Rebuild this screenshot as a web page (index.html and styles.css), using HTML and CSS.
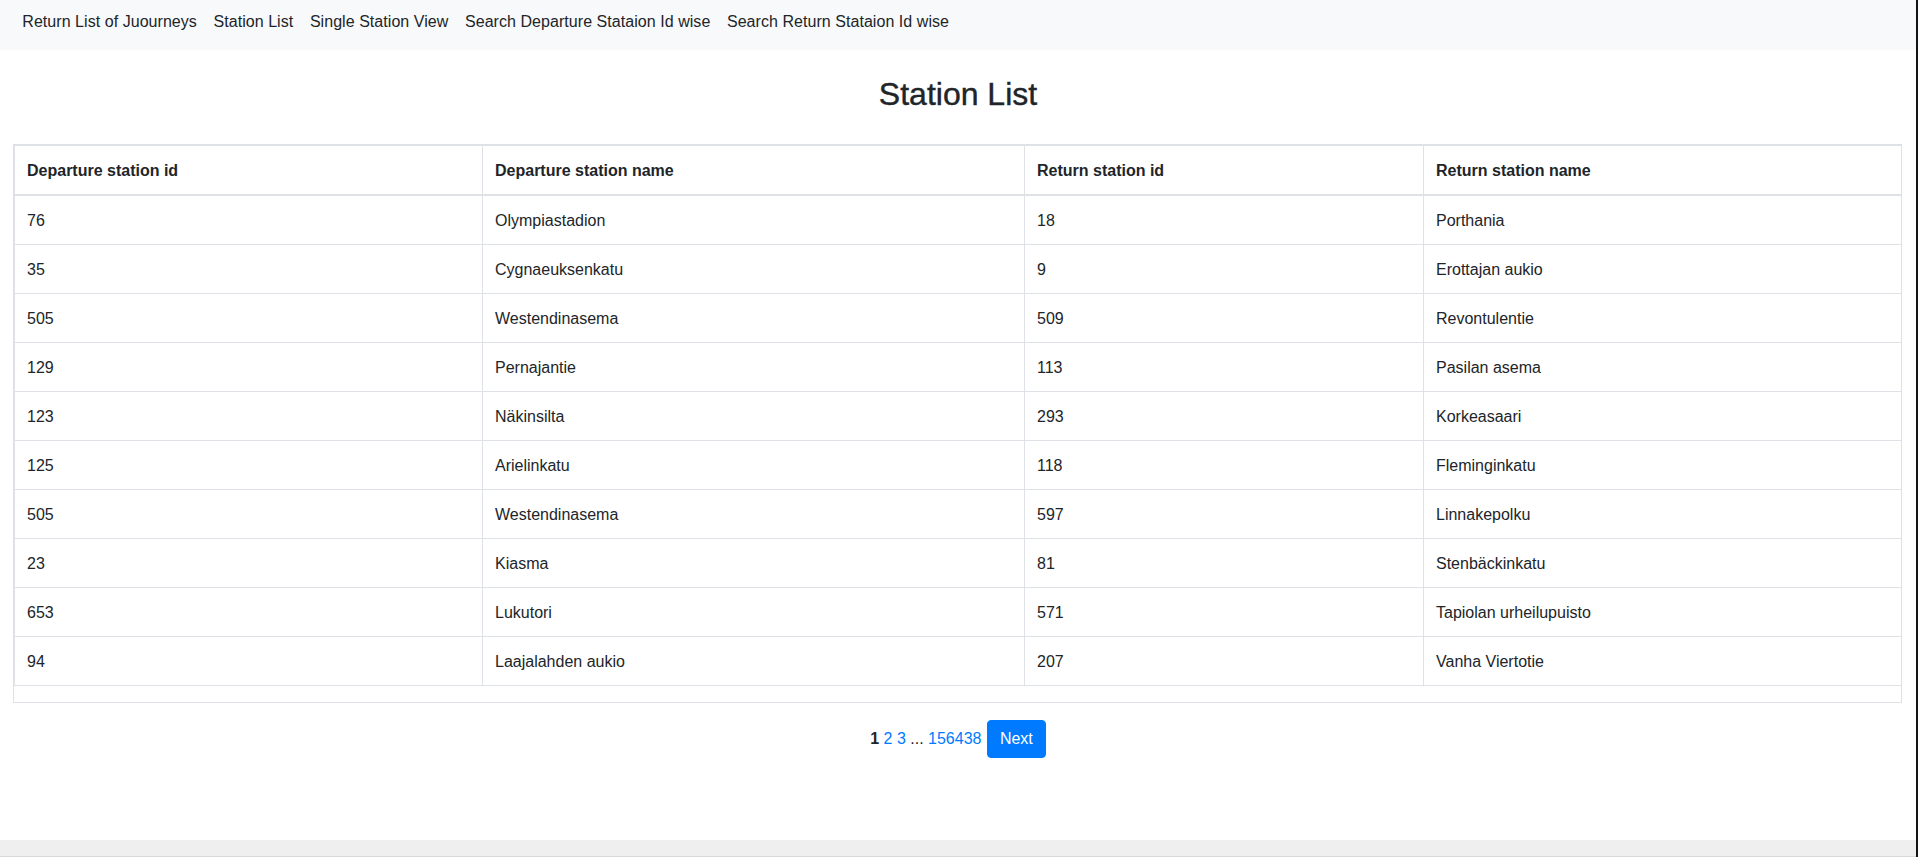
FILE: index.html
```html
<!DOCTYPE html>
<html lang="en">
<head>
<meta charset="utf-8">
<title>Station List</title>
<link rel="stylesheet" href="styles.css">
</head>
<body>
<div class="page">
  <nav class="navbar">
    <a class="nav-link" href="#">Return List of Juourneys</a>
    <a class="nav-link" href="#">Station List</a>
    <a class="nav-link" href="#">Single Station View</a>
    <a class="nav-link" href="#">Search Departure Stataion Id wise</a>
    <a class="nav-link" href="#">Search Return Stataion Id wise</a>
  </nav>
  <main class="main">
    <h2 class="title">Station List</h2>
    <div class="table-wrap">
      <table class="table">
        <colgroup>
          <col class="c1"><col class="c2"><col class="c3"><col class="c4">
        </colgroup>
        <thead>
          <tr><th>Departure station id</th><th>Departure station name</th><th>Return station id</th><th>Return station name</th></tr>
        </thead>
        <tbody>
          <tr><td>76</td><td>Olympiastadion</td><td>18</td><td>Porthania</td></tr>
          <tr><td>35</td><td>Cygnaeuksenkatu</td><td>9</td><td>Erottajan aukio</td></tr>
          <tr><td>505</td><td>Westendinasema</td><td>509</td><td>Revontulentie</td></tr>
          <tr><td>129</td><td>Pernajantie</td><td>113</td><td>Pasilan asema</td></tr>
          <tr><td>123</td><td>Näkinsilta</td><td>293</td><td>Korkeasaari</td></tr>
          <tr><td>125</td><td>Arielinkatu</td><td>118</td><td>Fleminginkatu</td></tr>
          <tr><td>505</td><td>Westendinasema</td><td>597</td><td>Linnakepolku</td></tr>
          <tr><td>23</td><td>Kiasma</td><td>81</td><td>Stenbäckinkatu</td></tr>
          <tr><td>653</td><td>Lukutori</td><td>571</td><td>Tapiolan urheilupuisto</td></tr>
          <tr><td>94</td><td>Laajalahden aukio</td><td>207</td><td>Vanha Viertotie</td></tr>
        </tbody>
      </table>
    </div>
    <div class="pagination">
      <b class="current">1</b> <a href="#" class="page-link">2</a> <a href="#" class="page-link">3</a> ... <a href="#" class="page-link">156438</a> <button class="btn-next">Next</button>
    </div>
  </main>
  <footer class="bottom-band"></footer>
</div>
</body>
</html>
```
FILE: styles.css
```css
html, body {
  margin: 0;
  padding: 0;
  background: #fff;
}
body {
  font-family: "Liberation Sans", Arial, sans-serif;
  font-size: 16px;
  line-height: 1.5;
  color: #212529;
}
.page {
  display: flex;
  flex-direction: column;
  min-height: 100vh;
  box-sizing: border-box;
  border-right: 2px solid #141414;
}
.navbar {
  display: flex;
  background: #f8f9fa;
  height: 50px;
  box-sizing: border-box;
  padding: 10px 14px 16px;
}
.nav-link {
  color: #212529;
  text-decoration: none;
  padding: 0 8.3px;
  line-height: 24px;
  letter-spacing: 0.05px;
}
.main {
  display: flex;
  flex-direction: column;
}
.title {
  font-size: 32px;
  font-weight: 500;
  line-height: 1.2;
  text-align: center;
  margin: 25px 0 31px;
  -webkit-text-stroke: 0.4px #212529;
}
.table-wrap {
  margin: 0 14px 0 13px;
  border: 1px solid #dee2e6;
}
.table {
  width: 100%;
  border-collapse: collapse;
  border: 1px solid #dee2e6;
  margin-bottom: 16px;
  table-layout: fixed;
}
.c1 { width: 468px; }
.c2 { width: 542px; }
.c3 { width: 399px; }
.c4 { width: 478px; }
.table th,
.table td {
  padding: 13px 12px 11px;
  border: 1px solid #dee2e6;
  text-align: left;
  vertical-align: top;
}
.table th {
  font-weight: 700;
  border-bottom-width: 2px;
}
.pagination {
  margin-top: 17px;
  text-align: center;
}
.current {
  font-weight: 700;
}
.page-link {
  color: #007bff;
  text-decoration: none;
}
.btn-next {
  font-family: inherit;
  font-size: 16px;
  line-height: 24px;
  color: #fff;
  background: #007bff;
  border: 1px solid #007bff;
  border-radius: 4px;
  padding: 6px 12px;
  margin-left: 1px;
  cursor: pointer;
}
.bottom-band {
  margin-top: auto;
  height: 17px;
  box-sizing: border-box;
  background: #efefef;
  border-bottom: 1px solid #d8d8d8;
}
```
